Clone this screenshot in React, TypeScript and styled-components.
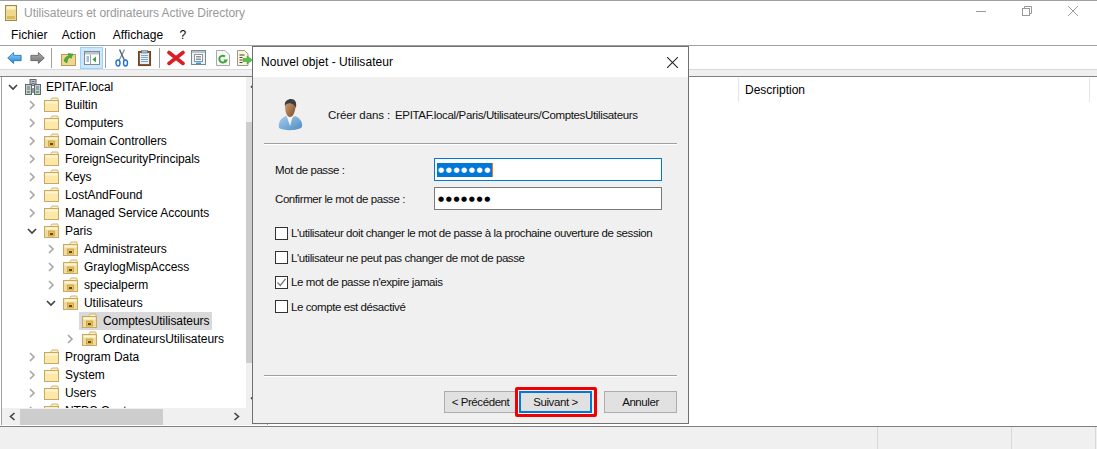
import React from "react";
import styled, { createGlobalStyle } from "styled-components";

const Global = createGlobalStyle`
  html, body { margin: 0; padding: 0; background: #fff; }
  * { box-sizing: border-box; }
  body { font-family: "Liberation Sans", Arial, sans-serif; font-size: 12px; color: #000; }
`;

const Page = styled.div`
  position: relative; width: 1097px; height: 449px; overflow: hidden;
  display: flex; flex-direction: column; background: #fff; border-top: 1px solid #a0a0a0;
`;
const TitleBar = styled.div`
  height: 23px; flex: none; display: flex; align-items: center; padding-left: 5px; gap: 7px; color: #999;
`;
const TitleText = styled.span`flex: 1; letter-spacing: -0.04px;`;
const WinControls = styled.div`display: flex; align-items: center; padding: 0 19px 3px 0; gap: 36px;`;
const MenuBar = styled.div`
  height: 22px; flex: none; display: flex; align-items: center; padding-left: 11px; border-bottom: 1px solid #a0a0a0;
`;
const MenuItem = styled.span<{ $ml?: number }>`letter-spacing: 0.1px; margin-left: ${p => p.$ml ?? 0}px;`;
const Toolbar = styled.div`
  height: 24px; flex: none; display: flex; align-items: center; padding-left: 6px; border-bottom: 1px solid #d9d9d9;
`;
const ToolBtn = styled.div<{ $w: number; $active?: boolean }>`
  width: ${p => p.$w}px; height: 22px; flex: none; display: flex; align-items: center; justify-content: center;
  background: ${p => (p.$active ? "#cce8ff" : "transparent")};
  border: 1px solid ${p => (p.$active ? "#99d1ff" : "transparent")};
`;
const ToolSep = styled.div<{ $l: number }>`
  width: 1px; height: 20px; background: #a0a0a0; margin: 0 5px 0 ${p => p.$l}px; flex: none;
`;
const Strip = styled.div`height: 7px; flex: none; background: #f0f0f0; border-bottom: 1px solid #808080;`;
const Panes = styled.div`
  flex: 1; min-height: 0; display: flex; background: #fff; border-bottom: 1px solid #808080; padding: 0 0 1px 1px;
`;
const TreePane = styled.div`
  width: 261px; flex: none; display: flex; flex-direction: column; border-left: 1px solid #a0a0a0; background: #fff;
`;
const TreeMain = styled.div`flex: 1; min-height: 0; display: flex;`;
const TreeList = styled.div`flex: 1; min-width: 0; overflow: hidden; padding-top: 1px;`;
const Row = styled.div<{ $level: number }>`
  height: 18px; display: flex; align-items: center; white-space: nowrap; padding-left: ${p => 6 + p.$level * 19}px;
`;
const Chevron = styled.span`width: 10px; height: 10px; flex: none; display: flex;`;
const RowLabel = styled.span<{ $selected?: boolean }>`
  height: 18px; display: flex; align-items: center; gap: 5px; margin-left: 4px; padding: 0 3px;
  background: ${p => (p.$selected ? "#d9d9d9" : "transparent")};
  letter-spacing: -0.05px; color: #000;
`;
const VScroll = styled.div`
  width: 16px; flex: none; background: #f0f0f0; display: flex; flex-direction: column;
`;
const VArrow = styled.div<{ $bottom?: boolean }>`
  height: 17px; flex: none; display: flex; align-items: center; justify-content: center;
  margin-top: ${p => (p.$bottom ? "auto" : "0")};
`;
const VThumb = styled.div`width: 16px; height: 241px; margin-top: 28px; background: #cdcdcd; flex: none;`;
const HScroll = styled.div`height: 17px; flex: none; background: #f0f0f0; display: flex; align-items: center; position: relative; padding-left: 18px;`;
const HThumb = styled.div`width: 143px; height: 16px; background: #cdcdcd;`;
const ScrollArrow = styled.span<{ $right?: boolean }>`
  position: absolute; top: 4px; ${p => (p.$right ? "right: 21px;" : "left: 6px;")}
  display: flex;
`;
const Splitter = styled.div`width: 5px; flex: none; background: #f0f0f0;`;
const ListPane = styled.div`flex: 1; min-width: 0; background: #fff; border-left: 1px solid #a0a0a0;`;
const ListHeader = styled.div`
  height: 25px; display: flex; align-items: center; padding-left: 470px;
`;
const ColHead = styled.div`
  flex: none; width: 352px; height: 24px; line-height: 24px; padding-left: 6px;
  border-left: 1px solid #e5e5e5; border-right: 1px solid #e5e5e5;
`;
const StatusBar = styled.div`height: 22px; flex: none; background: #f0f0f0; display: flex; justify-content: flex-end;`;
const StatusCell = styled.div<{ $w: number }>`width: ${p => p.$w}px; border-left: 1px solid #d9d9d9;`;

const Dialog = styled.div`
  position: absolute; left: 252px; top: 45px; width: 437px; height: 378px;
  display: flex; flex-direction: column; background: #f0f0f0; border: 1px solid #707070;
`;
const DialogTitle = styled.div`
  height: 30px; flex: none; background: #fff; display: flex; align-items: center; justify-content: space-between;
  padding: 0 10px 0 8px; letter-spacing: 0.05px;
`;
const DialogBody = styled.div`
  flex: 1; min-height: 0; display: flex; flex-direction: column; padding: 0 11px 10px;
  font-size: 11.5px; letter-spacing: -0.42px; color: #111;
`;
const Header = styled.div`height: 66px; flex: none; display: flex; align-items: center; padding-left: 14px; padding-top: 9px;`;
const HeaderLabel = styled.span`margin-left: 25px; width: 67px; flex: none; letter-spacing: -0.1px;`;
const HeaderPath = styled.span`letter-spacing: -0.35px;`;
const Rule = styled.div`height: 2px; flex: none; background: #a0a0a0; border-bottom: 1px solid #fff;`;
const Fields = styled.div`display: flex; flex-direction: column; gap: 6px; margin-top: 13px; padding-left: 11px;`;
const FieldRow = styled.div`display: flex; align-items: center; justify-content: space-between; padding-right: 15px;`;
const FieldLabel = styled.label``;
const PasswordBox = styled.div<{ $focus?: boolean }>`
  width: 228px; height: 23px; background: #fff; display: flex; align-items: center; padding-left: 2px;
  border: 1px solid ${p => (p.$focus ? "#0078d7" : "#7a7a7a")};
`;
const Dots = styled.span<{ $selected?: boolean }>`
  font-size: 7px; line-height: 14px; height: 14px; padding: 0 0 0 1px; letter-spacing: 1.6px;
  font-family: "DejaVu Sans", sans-serif;
  color: ${p => (p.$selected ? "#fff" : "#000")};
  background: ${p => (p.$selected ? "#0078d7" : "transparent")};
  border-right: ${p => (p.$selected ? "1px solid #f07818" : "none")};
`;
const Checks = styled.div`display: flex; flex-direction: column; margin-top: 11px; padding-left: 11px;`;
const CheckRow = styled.div`height: 24.5px; display: flex; align-items: center; gap: 3px; white-space: nowrap;`;
const CheckBox = styled.span`
  width: 13px; height: 13px; flex: none; background: #fff; border: 1px solid #333; display: flex;
`;
const Footer = styled.div`margin-top: auto; flex: none;`;
const Buttons = styled.div`display: flex; justify-content: flex-end; margin-top: 14px;`;
const Button = styled.div<{ $primary?: boolean; $left?: number }>`
  position: relative; height: 22px; width: 73px; display: flex; align-items: center; justify-content: center;
  margin-left: ${p => p.$left ?? 0}px;
  background: #e1e1e1; border: ${p => (p.$primary ? "2px solid #0078d7" : "1px solid #adadad")};
`;
const Highlight = styled.span`
  position: absolute; left: -6px; top: -6px; width: 82px; height: 30px;
  border: 3px solid #f00000; border-radius: 2px; pointer-events: none;
`;

const ChevronRight = () => (
  <svg width="10" height="10" viewBox="0 0 10 10"><path d="M3 1 L7 5 L3 9" fill="none" stroke="#a6a6a6" strokeWidth="1.6" /></svg>
);
const ChevronDown = () => (
  <svg width="10" height="10" viewBox="0 0 10 10"><path d="M1 3 L5 7 L9 3" fill="none" stroke="#404040" strokeWidth="1.6" /></svg>
);
const Folder = ({ ou }: { ou?: boolean }) => (
  <svg width="16" height="16" viewBox="0 0 16 16" style={{ flex: "none" }}>
    <path d="M7 2.5 L8 1 H13.5 a.5 .5 0 0 1 .5 .5 V4 H7 Z" fill="#fdf3c8" stroke="#c8ac6a" strokeWidth="0.9" />
    <rect x="0.5" y="3.5" width="14" height="11" fill={ou ? "#f0dca0" : "#fde8a8"} stroke="#c8a862" />
    <rect x="1.5" y="4.5" width="12" height="2" fill="#fff6d6" />
    {ou && (
      <>
        <rect x="4.5" y="8" width="6" height="5" fill="#e9c24e" stroke="#b8923a" strokeWidth="0.6" />
        <rect x="6" y="10" width="3" height="2" fill="#5c4a18" />
      </>
    )}
  </svg>
);
const ServerIcon = () => (
  <svg width="16" height="16" viewBox="0 0 16 16" style={{ flex: "none" }}>
    <rect x="5" y="0.5" width="6" height="6" fill="#b9c0c6" stroke="#5d6870" />
    <rect x="0.5" y="5.5" width="6" height="10" fill="#c6ccd1" stroke="#5d6870" />
    <rect x="9.5" y="5.5" width="6" height="10" fill="#c6ccd1" stroke="#5d6870" />
    <path d="M2 8h3M2 10h3M11 8h3M11 10h3M6.5 2.5h3M6.5 4.5h3" stroke="#69747c" />
    <rect x="2" y="12" width="3" height="2" fill="#58b947" />
    <rect x="11" y="12" width="3" height="2" fill="#58b947" />
    <rect x="7" y="9" width="2" height="5" fill="#8d979e" />
  </svg>
);
const WindowAppIcon = () => (
  <svg width="12" height="16" viewBox="0 0 12 16" style={{ flex: "none" }}>
    <rect x="0.5" y="0.5" width="11" height="15" fill="#eed98e" stroke="#a3894a" />
    <rect x="1.5" y="1.5" width="9" height="3" fill="#fff4c4" />
    <rect x="2" y="11" width="8" height="3" fill="#d9bb5c" />
  </svg>
);
const Minimize = () => <svg width="10" height="10" viewBox="0 0 10 10"><path d="M0 5.5 H10" stroke="#999" /></svg>;
const Restore = () => (
  <svg width="10" height="10" viewBox="0 0 10 10" fill="none" stroke="#999"><rect x="0.5" y="2.5" width="7" height="7" /><path d="M2.5 2.5 V0.5 H9.5 V7.5 H7.5" /></svg>
);
const CloseX = ({ c = "#999", s = 10 }: { c?: string; s?: number }) => (
  <svg width={s} height={s} viewBox="0 0 10 10"><path d="M0 0 L10 10 M10 0 L0 10" stroke={c} strokeWidth={0.95} /></svg>
);
const ArrowLeft = () => (
  <svg width="17" height="14" viewBox="0 0 17 14">
    <defs><linearGradient id="ab" x1="0" y1="0" x2="0" y2="1"><stop offset="0" stopColor="#9bd4f8" /><stop offset="1" stopColor="#1c82d8" /></linearGradient></defs>
    <path d="M0.8 7 L7.5 0.8 V4 H16 V10 H7.5 V13.2 Z" fill="url(#ab)" stroke="#2a77b8" strokeLinejoin="round" />
  </svg>
);
const ArrowRight = () => (
  <svg width="17" height="14" viewBox="0 0 17 14">
    <defs><linearGradient id="ag" x1="0" y1="0" x2="0" y2="1"><stop offset="0" stopColor="#b0b0b0" /><stop offset="1" stopColor="#6e6e6e" /></linearGradient></defs>
    <path d="M16.2 7 L9.5 0.8 V4 H1 V10 H9.5 V13.2 Z" fill="url(#ag)" stroke="#666" strokeLinejoin="round" />
  </svg>
);
const UpFolder = () => (
  <svg width="15" height="16" viewBox="0 0 15 16">
    <rect x="0.5" y="4.5" width="14" height="11" fill="#f0d68e" stroke="#bd9a55" />
    <path d="M3 11 C4 7 6 6 8 6 L7 3.5 L12 4 L10 8.5 L9 7 C7.5 8 6 10 6 13 Z" fill="#48ae3c" stroke="#2f8a28" strokeWidth="0.5" />
  </svg>
);
const TreeToggle = () => (
  <svg width="16" height="14" viewBox="0 0 16 14">
    <rect x="0.5" y="0.5" width="15" height="13" fill="#fff" stroke="#7f8a92" />
    <rect x="1" y="1" width="14" height="2.5" fill="#bcc5cc" />
    <path d="M6.5 3.5 V13" stroke="#9aa4ac" />
    <path d="M2.5 6h2.5M2.5 8h2.5M2.5 10h2.5" stroke="#4a7ca8" />
    <path d="M12 5.5 L8.5 8.5 L12 11.5 Z" fill="#35a33a" />
  </svg>
);
const Scissors = () => (
  <svg width="14" height="18" viewBox="0 0 14 18" fill="none">
    <path d="M9.5 0.5 L4 11.5" stroke="#8a98a6" strokeWidth="1.4" />
    <path d="M4.5 0.5 L9.5 11.5" stroke="#4d6678" strokeWidth="1.4" />
    <ellipse cx="3" cy="14" rx="2" ry="3" stroke="#1e6fd0" strokeWidth="1.4" />
    <ellipse cx="10.5" cy="14" rx="2" ry="3" stroke="#1e6fd0" strokeWidth="1.4" />
  </svg>
);
const Clipboard = () => (
  <svg width="13" height="16" viewBox="0 0 13 16">
    <rect x="0.5" y="1.5" width="12" height="14" fill="#8a5a34" stroke="#6d4526" />
    <rect x="2" y="3" width="9" height="11" fill="#e4f0f8" />
    <path d="M3 5.5h7M3 7.5h7M3 9.5h7M3 11.5h7" stroke="#7ea8c8" />
    <rect x="3.5" y="0" width="6" height="3" fill="#b0b8be" stroke="#555" strokeWidth="0.5" />
  </svg>
);
const RedX = () => (
  <svg width="18" height="16" viewBox="0 0 18 16">
    <path d="M2 2.5 L16 13.5 M16 2.5 L2 13.5" stroke="#d81f26" strokeWidth="3.6" strokeLinecap="round" />
  </svg>
);
const Props = () => (
  <svg width="15" height="15" viewBox="0 0 15 15">
    <rect x="0.5" y="0.5" width="14" height="14" fill="#eef1f3" stroke="#7b8790" />
    <rect x="1" y="1" width="13" height="2" fill="#b8c2ca" />
    <rect x="3.5" y="4.5" width="8" height="7" fill="#fff" stroke="#8a96a0" />
    <path d="M5 6.5h5M5 8h5M5 9.5h5" stroke="#8a96a0" />
    <rect x="5" y="12.5" width="5" height="1.5" fill="#2ea0e0" />
  </svg>
);
const Refresh = () => (
  <svg width="14" height="16" viewBox="0 0 14 16">
    <path d="M0.5 0.5 H9 L13.5 5 V15.5 H0.5 Z" fill="#f8f8f8" stroke="#a9a9a9" />
    <path d="M9.5 11 A3.4 3.4 0 1 1 9 6.5" fill="none" stroke="#3aa835" strokeWidth="2" />
    <path d="M7.5 9.5 L12 9.5 L9.7 13 Z" fill="#3aa835" />
  </svg>
);
const Export = () => (
  <svg width="16" height="16" viewBox="0 0 16 16">
    <path d="M0.5 0.5 H7.5 L11 4 V15.5 H0.5 Z" fill="#fbf4d6" stroke="#9a9a8a" />
    <path d="M2.5 5h5M2.5 7.5h3M2.5 10h3M2.5 12.5h3" stroke="#444" />
    <path d="M6 8.5 H10 V6 L15.5 10 L10 14 V11.5 H6 Z" fill="#56c04a" stroke="#3a9a32" strokeWidth="0.5" />
  </svg>
);
const Person = () => (
  <svg width="25" height="32" viewBox="0 0 25 32">
    <defs>
      <linearGradient id="skin" x1="0" y1="0" x2="1" y2="1"><stop offset="0" stopColor="#d8a878" /><stop offset="1" stopColor="#7a4a28" /></linearGradient>
      <linearGradient id="shirt" x1="0" y1="0" x2="1" y2="1"><stop offset="0" stopColor="#a8cdea" /><stop offset="1" stopColor="#4f8cc4" /></linearGradient>
    </defs>
    <path d="M1 29 C0 23 3 19 8 17 L12 20 L17 17 C22 19 25 23 24 28 C20 32 6 32 1 29 Z" fill="url(#shirt)" />
    <path d="M9 18 L12 27 L14.5 18 Z" fill="#f4f6f8" />
    <path d="M7 6 C7 2 10 1 13 1 C16 1 18 3 17.5 8 C17 13 15 18 12 18 C8 18 7 11 7 6 Z" fill="url(#skin)" />
    <path d="M7 7 C6 2 10 0 13 0 C17 0 19 3 18 9 C17 7 16 5 13 4.5 C10 4 8 5 7 7 Z" fill="#3b3d3f" />
  </svg>
);
const Check = () => (
  <svg width="11" height="11" viewBox="0 0 11 11"><path d="M1.5 5.5 L4.3 8.5 L9.5 1.8" fill="none" stroke="#777" strokeWidth="1.3" /></svg>
);
const Caret = ({ d }: { d: string }) => (
  <svg width="9" height="9" viewBox="0 0 9 9"><path d={d} fill="none" stroke="#404040" strokeWidth="1.6" /></svg>
);

type Item = { label: string; level: number; open?: boolean; leaf?: boolean; ou?: boolean; selected?: boolean; root?: boolean };
const items: Item[] = [
  { label: "EPITAF.local", level: 0, open: true, root: true },
  { label: "Builtin", level: 1 },
  { label: "Computers", level: 1 },
  { label: "Domain Controllers", level: 1, ou: true },
  { label: "ForeignSecurityPrincipals", level: 1 },
  { label: "Keys", level: 1 },
  { label: "LostAndFound", level: 1 },
  { label: "Managed Service Accounts", level: 1 },
  { label: "Paris", level: 1, open: true, ou: true },
  { label: "Administrateurs", level: 2, ou: true },
  { label: "GraylogMispAccess", level: 2, ou: true },
  { label: "specialperm", level: 2, ou: true },
  { label: "Utilisateurs", level: 2, open: true, ou: true },
  { label: "ComptesUtilisateurs", level: 3, leaf: true, ou: true, selected: true },
  { label: "OrdinateursUtilisateurs", level: 3, ou: true },
  { label: "Program Data", level: 1 },
  { label: "System", level: 1 },
  { label: "Users", level: 1 },
  { label: "NTDS Quotas", level: 1 },
];

const checks = [
  { label: "L'utilisateur doit changer le mot de passe à la prochaine ouverture de session", on: false },
  { label: "L'utilisateur ne peut pas changer de mot de passe", on: false },
  { label: "Le mot de passe n'expire jamais", on: true },
  { label: "Le compte est désactivé", on: false },
];

export default function App() {
  return (
    <Page>
      <Global />
      <TitleBar>
        <WindowAppIcon />
        <TitleText>Utilisateurs et ordinateurs Active Directory</TitleText>
        <WinControls>
          <Minimize />
          <Restore />
          <CloseX />
        </WinControls>
      </TitleBar>
      <MenuBar>
        <MenuItem>Fichier</MenuItem>
        <MenuItem $ml={14}>Action</MenuItem>
        <MenuItem $ml={17}>Affichage</MenuItem>
        <MenuItem $ml={16}>?</MenuItem>
      </MenuBar>
      <Toolbar>
        <ToolBtn $w={17}><ArrowLeft /></ToolBtn>
        <ToolBtn $w={6} />
        <ToolBtn $w={17}><ArrowRight /></ToolBtn>
        <ToolSep $l={5} />
        <ToolBtn $w={23}><UpFolder /></ToolBtn>
        <ToolBtn $w={23} $active><TreeToggle /></ToolBtn>
        <ToolSep $l={2} />
        <ToolBtn $w={22}><Scissors /></ToolBtn>
        <ToolBtn $w={22}><Clipboard /></ToolBtn>
        <ToolSep $l={4} />
        <ToolBtn $w={21}><RedX /></ToolBtn>
        <ToolBtn $w={25}><Props /></ToolBtn>
        <ToolBtn $w={23}><Refresh /></ToolBtn>
        <ToolBtn $w={21}><Export /></ToolBtn>
      </Toolbar>
      <Strip />
      <Panes>
        <TreePane>
          <TreeMain>
            <TreeList>
              {items.map(it => (
                <Row key={it.label} $level={it.level}>
                  <Chevron>{it.leaf ? null : it.open ? <ChevronDown /> : <ChevronRight />}</Chevron>
                  <RowLabel $selected={it.selected}>
                    {it.root ? <ServerIcon /> : <Folder ou={it.ou} />}
                    {it.label}
                  </RowLabel>
                </Row>
              ))}
            </TreeList>
            <VScroll>
              <VArrow><Caret d="M1 6.5 L4.5 2.5 L8 6.5" /></VArrow>
              <VThumb />
              <VArrow $bottom><Caret d="M1 2.5 L4.5 6.5 L8 2.5" /></VArrow>
            </VScroll>
          </TreeMain>
          <HScroll>
            <ScrollArrow><Caret d="M6.5 1 L2.5 4.5 L6.5 8" /></ScrollArrow>
            <HThumb />
            <ScrollArrow $right><Caret d="M2.5 1 L6.5 4.5 L2.5 8" /></ScrollArrow>
          </HScroll>
        </TreePane>
        <Splitter />
        <ListPane>
          <ListHeader><ColHead>Description</ColHead></ListHeader>
        </ListPane>
      </Panes>
      <StatusBar>
        <StatusCell $w={134} />
        <StatusCell $w={84} />
        <StatusCell $w={2} />
      </StatusBar>
      <Dialog>
        <DialogTitle>
          Nouvel objet - Utilisateur
          <CloseX c="#222" s={11} />
        </DialogTitle>
        <DialogBody>
          <Header>
            <Person />
            <HeaderLabel>Créer dans :</HeaderLabel>
            <HeaderPath>EPITAF.local/Paris/Utilisateurs/ComptesUtilisateurs</HeaderPath>
          </Header>
          <Rule />
          <Fields>
            <FieldRow>
              <FieldLabel>Mot de passe :</FieldLabel>
              <PasswordBox $focus><Dots $selected>●●●●●●●</Dots></PasswordBox>
            </FieldRow>
            <FieldRow>
              <FieldLabel>Confirmer le mot de passe :</FieldLabel>
              <PasswordBox><Dots>●●●●●●●</Dots></PasswordBox>
            </FieldRow>
          </Fields>
          <Checks>
            {checks.map(c => (
              <CheckRow key={c.label}>
                <CheckBox>{c.on && <Check />}</CheckBox>
                {c.label}
              </CheckRow>
            ))}
          </Checks>
          <Footer>
            <Rule />
            <Buttons>
              <Button>&lt; Précédent</Button>
              <Button $primary $left={2}>Suivant &gt;<Highlight /></Button>
              <Button $left={12}>Annuler</Button>
            </Buttons>
          </Footer>
        </DialogBody>
      </Dialog>
    </Page>
  );
}
